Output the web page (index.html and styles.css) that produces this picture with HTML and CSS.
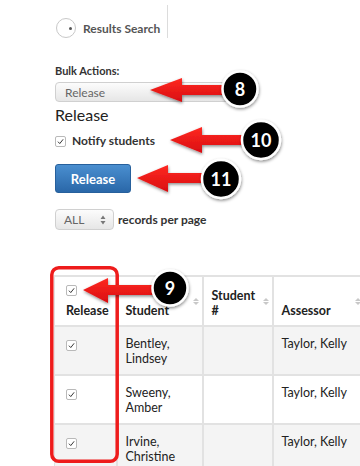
FILE: index.html
```html
<!DOCTYPE html>
<html lang="en">
  <head>
    <meta charset="UTF-8">
    <title>Bulk release</title>
    <link rel="stylesheet" href="styles.css">
  </head>
  <body>
    <div class="page">
      <div class="topbar">
        <div class="search">
          <span class="radio"><span class="dot"></span></span>
          <span class="search-label">Results Search</span>
        </div>
        <div class="divider"></div>
      </div>

      <div class="bulk-label">Bulk Actions:</div>
      <div class="select wide">Release</div>
      <h2 class="action-title">Release</h2>
      <label class="notify"><span class="cb"><svg viewBox="0 0 10 10"><path d="M2.2 5.2 L4.2 7.3 L7.9 2.6"/></svg></span>Notify students</label>
      <button class="btn-release">Release</button>
      <div class="per-page">
        <div class="select small">ALL<span class="updown"><svg viewBox="0 0 6 10"><path d="M3 0.5 L5.5 4 L0.5 4 Z M3 9.5 L5.5 6 L0.5 6 Z"/></svg></span></div>
        <span class="per-label">records per page</span>
      </div>

      <table class="results">
        <colgroup>
          <col class="c-rel">
          <col class="c-student">
          <col class="c-num">
          <col class="c-assessor">
        </colgroup>
        <thead>
          <tr>
            <th class="col-rel"><span class="cb"><svg viewBox="0 0 10 10"><path d="M2.2 5.2 L4.2 7.3 L7.9 2.6"/></svg></span><br>Release</th>
            <th>Student<span class="sort"></span></th>
            <th>Student<br>#<span class="sort"></span></th>
            <th class="col-last">Assessor<span class="sort"></span></th>
          </tr>
        </thead>
        <tbody>
          <tr class="odd">
            <td class="col-rel"><span class="cb"><svg viewBox="0 0 10 10"><path d="M2.2 5.2 L4.2 7.3 L7.9 2.6"/></svg></span></td>
            <td>Bentley,<br>Lindsey</td>
            <td></td>
            <td class="col-last">Taylor, Kelly</td>
          </tr>
          <tr>
            <td class="col-rel"><span class="cb"><svg viewBox="0 0 10 10"><path d="M2.2 5.2 L4.2 7.3 L7.9 2.6"/></svg></span></td>
            <td>Sweeny,<br>Amber</td>
            <td></td>
            <td class="col-last">Taylor, Kelly</td>
          </tr>
          <tr class="odd">
            <td class="col-rel"><span class="cb"><svg viewBox="0 0 10 10"><path d="M2.2 5.2 L4.2 7.3 L7.9 2.6"/></svg></span></td>
            <td>Irvine,<br>Christine</td>
            <td></td>
            <td class="col-last">Taylor, Kelly</td>
          </tr>
        </tbody>
      </table>
    </div>

    <!-- annotation layer -->
    <svg class="callouts" width="360" height="466" viewBox="0 0 360 466">
      <defs>
        <linearGradient id="red" x1="0" y1="0" x2="0" y2="1">
          <stop offset="0" stop-color="#ff2a22"/>
          <stop offset="1" stop-color="#d80d10"/>
        </linearGradient>
        <filter id="shadow" x="-30%" y="-30%" width="160%" height="160%">
          <feDropShadow dx="0.5" dy="1.5" stdDeviation="1.5" flood-color="#000" flood-opacity="0.45"/>
        </filter>
      </defs>

      <rect class="highlight" x="51.8" y="267.8" width="65.4" height="193.4" rx="7"/>

      <polygon class="arrow" points="150,90 182,78 182,85 228,85 228,95 182,95 182,102"/>
      <polygon class="arrow" points="170,140 202,127 202,135 250,135 250,145 202,145 202,153"/>
      <polygon class="arrow" points="137,178 168,165 168,173 210,173 210,183 168,183 168,192"/>
      <polygon class="arrow" points="83,290 108,278 108,285 160,285 160,295 108,295 108,303"/>

      <g class="badge">
        <circle cx="240" cy="89" r="17.5"/>
        <text x="240" y="95.5">8</text>
      </g>
      <g class="badge">
        <circle cx="261" cy="140" r="19"/>
        <text x="261" y="146.5">10</text>
      </g>
      <g class="badge">
        <circle cx="221" cy="179" r="19"/>
        <text x="221" y="185.5">11</text>
      </g>
      <g class="badge">
        <circle cx="170" cy="288" r="17.5"/>
        <text x="170" y="294.5">9</text>
      </g>
    </svg>
  </body>
</html>
```

FILE: styles.css
```css
body {
  margin: 0;
  width: 360px;
  height: 466px;
  overflow: hidden;
  position: relative;
  background: #fff;
  font-family: Lato, "Open Sans", Arial, sans-serif;
  color: #222;
}
.page {
  padding-left: 55px;
}

/* top search bar */
.topbar {
  display: flex;
  height: 33px;
  margin-top: 5px;
}
.search {
  display: flex;
  align-items: center;
  gap: 7px;
  padding-top: 13px;
  padding-left: 1px;
}
.radio {
  width: 18px;
  height: 18px;
  border: 1px solid #c8c8c8;
  border-radius: 50%;
  position: relative;
  box-sizing: content-box;
}
.dot {
  position: absolute;
  left: 12px;
  top: 8px;
  width: 3px;
  height: 3px;
  border-radius: 50%;
  background: #555;
}
.search-label {
  font-size: 12px;
  font-weight: bold;
  color: #555;
}
.divider {
  width: 1px;
  background: #dcdcdc;
  margin-left: 7px;
}

/* bulk actions */
.bulk-label {
  margin-top: 26px;
  font-size: 11px;
  line-height: 14px;
  font-weight: bold;
  color: #333;
}
.select {
  box-sizing: border-box;
  border: 1px solid #d0d0d0;
  border-radius: 4px;
  background: linear-gradient(#fcfcfc, #e6e6e6);
  color: #666;
  font-size: 12px;
  display: flex;
  align-items: center;
}
.select.wide {
  margin-top: 4px;
  width: 175px;
  height: 20px;
  padding-left: 9px;
}
.action-title {
  margin: 3px 0 0;
  font-size: 16px;
  line-height: 20px;
  font-weight: normal;
  color: #222;
}
.notify {
  margin-top: 9px;
  display: flex;
  align-items: center;
  gap: 6px;
  font-size: 12px;
  font-weight: bold;
  line-height: 14px;
  color: #333;
}
.cb {
  display: inline-block;
  box-sizing: border-box;
  width: 11px;
  height: 11px;
  border: 1px solid #b9b9b9;
  border-radius: 2px;
  background: #fff;
  vertical-align: top;
}
.cb svg {
  display: block;
  width: 9px;
  height: 9px;
}
.cb path {
  fill: none;
  stroke: #333;
  stroke-width: 1.1;
}
.btn-release {
  display: block;
  margin-top: 16px;
  width: 76px;
  height: 29px;
  border: 1px solid #27609c;
  border-radius: 3px;
  background: linear-gradient(#4a8fd0, #2a67a8);
  color: #fff;
  font-family: Lato, "Open Sans", Arial, sans-serif;
  font-size: 13px;
  font-weight: bold;
  padding: 0;
}
.per-page {
  margin-top: 16px;
  display: flex;
  align-items: center;
  gap: 4px;
}
.select.small {
  width: 59px;
  height: 21px;
  padding-left: 8px;
  position: relative;
}
.updown {
  position: absolute;
  right: 7px;
  top: 5px;
}
.updown svg {
  display: block;
  width: 6px;
  height: 10px;
  fill: #777;
}
.per-label {
  font-size: 12px;
  font-weight: bold;
  color: #333;
}

/* results table, cut off at the right edge like the screenshot */
.results {
  margin-top: 45px;
  margin-left: -1px;
  border-collapse: collapse;
  table-layout: fixed;
  width: 306px;
  font-size: 12.5px;
  line-height: 15px;
  color: #222;
}
.c-rel { width: 62px; }
.c-student { width: 86px; }
.c-num { width: 70px; }
.c-assessor { width: 88px; }
.results th,
.results td {
  box-sizing: border-box;
  border: 2px solid #e2e2e2;
  padding: 0 8px;
  text-align: left;
}
.results th {
  height: 50px;
  vertical-align: bottom;
  padding-bottom: 7px;
  font-weight: bold;
  position: relative;
  background: #fff;
}
.results td {
  height: 49px;
  vertical-align: top;
  padding-top: 9px;
}
.results tr.odd td {
  background: #f4f4f4;
}
.results .col-rel {
  padding-left: 11px;
  border-left-width: 1px;
}
.results .col-last {
  border-right: none;
  white-space: nowrap;
}
.results th.col-rel .cb {
  margin-bottom: 7px;
}
.results td.col-rel .cb {
  margin-top: 4px;
}
.sort {
  position: absolute;
  right: 3px;
  top: 21px;
  width: 0;
  height: 0;
  border-left: 3px solid transparent;
  border-right: 3px solid transparent;
  border-bottom: 3px solid #c8c8c8;
}
.col-last .sort {
  right: 0;
}
.sort::after {
  content: "";
  position: absolute;
  left: -3px;
  top: 4px;
  border-left: 3px solid transparent;
  border-right: 3px solid transparent;
  border-top: 3px solid #c8c8c8;
}

/* annotations */
.callouts {
  position: absolute;
  left: 0;
  top: 0;
  pointer-events: none;
}
.highlight {
  fill: none;
  stroke: #ee1c1c;
  stroke-width: 3.5;
}
.arrow {
  fill: url(#red);
  filter: url(#shadow);
}
.badge circle {
  fill: #000;
  stroke: #fff;
  stroke-width: 2.5;
  filter: url(#shadow);
}
.badge text {
  fill: #fff;
  font-family: Lato, Arial, sans-serif;
  font-weight: bold;
  font-size: 18px;
  text-anchor: middle;
}
```
